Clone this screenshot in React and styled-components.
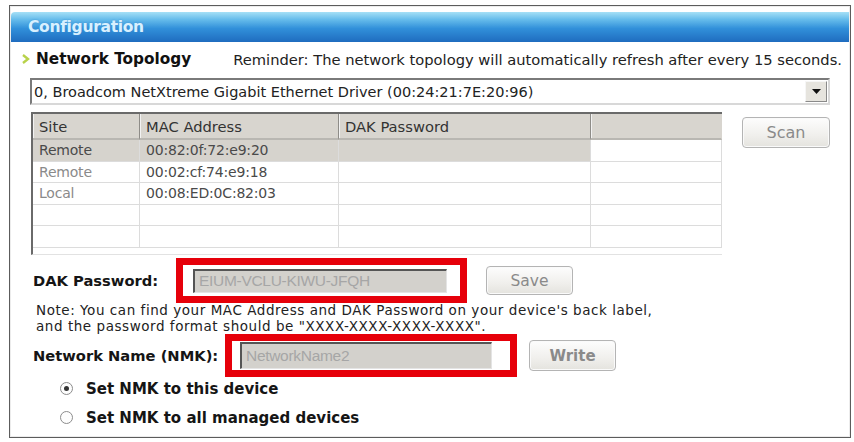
import React, { useState } from "react";
import styled, { createGlobalStyle } from "styled-components";

const GlobalStyle = createGlobalStyle`
  body {
    margin: 0;
    background: #ffffff;
    font-family: "DejaVu Sans", Verdana, sans-serif;
  }
`;

const Frame = styled.div`
  box-sizing: border-box;
  margin: 5px 0 0 9px;
  width: 842px;
  height: 433px;
  border: 1px solid #5c5c5c;
  box-shadow: inset 0 0 0 1px #ececec;
  background: #fff;
`;

const TitleBar = styled.div`
  margin: 6px 1px 0 1px;
  height: 30px;
  padding-left: 17px;
  display: flex;
  align-items: center;
  font-size: 15.5px;
  font-weight: bold;
  color: #d8f0ff;
  letter-spacing: -0.3px;
  text-shadow: 0 0 2px #3f8fd0;
  background: linear-gradient(#a6e0f6 0%, #66bceb 25%, #3190da 55%, #1f6cbf 100%);
  border-top-left-radius: 4px;
`;

const Body = styled.div`
  padding: 0 20px;
`;

const TopicRow = styled.div`
  display: flex;
  align-items: center;
  height: 22px;
  margin: 6px -12px 0 -9px;
  font-size: 14.7px;
  color: #222;
`;

const TopicTitle = styled.span`
  font-weight: bold;
  font-size: 15.3px;
  color: #111;
  margin-left: 1px;
`;

const Reminder = styled.span`
  margin-left: auto;
`;

const Select = styled.div`
  box-sizing: border-box;
  margin-top: 8px;
  height: 27px;
  display: flex;
  align-items: center;
  border: 2px solid #7a7a7a;
  border-right-color: #d8d8d8;
  border-bottom-color: #d8d8d8;
  font-size: 14.5px;
  color: #222;
  padding-left: 2px;
`;

const SelectText = styled.span`
  flex: 1;
`;

const SelectArrow = styled.div`
  width: 22px;
  height: 21px;
  margin-right: 1px;
  display: flex;
  align-items: center;
  justify-content: center;
  background: #e6e4de;
  border: 1px solid #8a8a8a;
  border-top-color: #f6f6f6;
  border-left-color: #f6f6f6;
  box-sizing: border-box;
`;

const TableRow = styled.div`
  display: flex;
  align-items: flex-start;
  margin-top: 7px;
`;

const Table = styled.div`
  box-sizing: border-box;
  margin-left: 1px;
  width: 692px;
  height: 143px;
  border-top: 2px solid #6a6a6a;
  border-left: 2px solid #6a6a6a;
  border-bottom: 1px solid #e2e2e2;
  display: grid;
  grid-template-columns: 107px 199px 252px 1fr;
  grid-template-rows: 26px repeat(5, 21.5px);
  align-content: start;
`;

const HeadCell = styled.div`
  background: #d8d5cf;
  color: #333;
  padding-left: 6px;
  display: flex;
  align-items: center;
  font-size: 14.7px;
  border-right: 1px solid ${(p) => (p.last ? "#d8d5cf" : "#8e8c88")};
  border-bottom: 2px solid #b9b7b2;
  box-shadow: inset 1px 0 0 #f2f2f2;
`;

const Cell = styled.div`
  background: ${(p) => (p.selected ? "#d6d3cd" : "#fff")};
  color: ${(p) => (p.dim ? "#8a8a8a" : "#4a4a4a")};
  padding-left: 6px;
  display: flex;
  align-items: center;
  border-right: 1px solid #dcdcdc;
  border-bottom: 1px solid #dcdcdc;
  font-size: 14px;
  letter-spacing: -0.2px;
  white-space: nowrap;
`;

const Button = styled.button`
  box-sizing: border-box;
  width: ${(p) => p.w || 87}px;
  height: ${(p) => p.h || 29}px;
  margin-left: ${(p) => p.ml || 0}px;
  margin-top: ${(p) => p.mt || 0}px;
  border: 1px solid #b4b4b4;
  border-radius: 4px;
  background: linear-gradient(#fdfdfd, #f0efec 60%, #e4e3de);
  box-shadow: inset 0 0 0 1px #fafafa;
  color: #8a8a8a;
  font-family: "DejaVu Sans", Verdana, sans-serif;
  font-size: ${(p) => p.fs || 15.5}px;
  font-weight: ${(p) => (p.bold ? "bold" : "normal")};
  padding: 0;
`;

const FieldRow = styled.div`
  display: flex;
  align-items: center;
  margin-top: ${(p) => p.mt}px;
  padding-left: 3px;
`;

const Label = styled.div`
  width: ${(p) => p.w}px;
  font-size: 14.7px;
  font-weight: bold;
  color: #151515;
`;

const FieldWrap = styled.div`
  position: relative;
`;

const Input = styled.div`
  box-sizing: border-box;
  width: ${(p) => p.w}px;
  height: ${(p) => p.h}px;
  background: #d3d1cc;
  border-top: 2px solid #555;
  border-left: 2px solid #555;
  border-right: 1px solid #e4e4e4;
  border-bottom: 1px solid #e4e4e4;
  color: #a6a6a6;
  font-family: "Liberation Sans", Arial, sans-serif;
  font-size: 15.5px;
  padding-left: 4px;
  display: flex;
  align-items: center;
  letter-spacing: -0.3px;
`;

const RedMark = styled.div`
  position: absolute;
  top: ${(p) => p.t}px;
  bottom: ${(p) => p.b}px;
  left: ${(p) => p.l}px;
  right: ${(p) => p.r}px;
  border: 7px solid #e6000a;
  pointer-events: none;
`;

const Note = styled.div`
  margin-top: 7px;
  padding-left: 6px;
  font-size: 13.5px;
  letter-spacing: 0.55px;
  line-height: 16px;
  color: #222;
  white-space: nowrap;
`;

const RadioGroup = styled.div`
  margin-top: 3px;
  padding-left: 30px;
`;

const RadioRow = styled.label`
  display: flex;
  align-items: center;
  height: 29px;
  font-size: 15px;
  font-weight: bold;
  color: #151515;
  gap: 13px;
`;

const RadioDot = styled.span`
  box-sizing: border-box;
  width: 13px;
  height: 13px;
  border-radius: 50%;
  border: 1px solid #8c8c8c;
  background: #fdfdfd;
  display: flex;
  align-items: center;
  justify-content: center;
  &::after {
    content: "";
    width: 5px;
    height: 5px;
    border-radius: 50%;
    background: ${(p) => (p.on ? "#333" : "transparent")};
  }
`;

const rows = [
  { site: "Remote", mac: "00:82:0f:72:e9:20", selected: true, dim: false },
  { site: "Remote", mac: "00:02:cf:74:e9:18", selected: false, dim: true },
  { site: "Local", mac: "00:08:ED:0C:82:03", selected: false, dim: true },
  { site: "", mac: "", selected: false, dim: true },
  { site: "", mac: "", selected: false, dim: true },
];

const App = () => {
  const [mode, setMode] = useState("this");

  return (
    <>
      <GlobalStyle />
      <Frame>
        <TitleBar>Configuration</TitleBar>
        <Body>
          <TopicRow>
            <svg width="10" height="10" viewBox="0 0 10 10" style={{ marginRight: 4 }}>
              <path d="M2 1 L7 5 L2 9" fill="none" stroke="#b8d24a" strokeWidth="2.4" />
            </svg>
            <TopicTitle>Network Topology</TopicTitle>
            <Reminder>
              Reminder: The network topology will automatically refresh after every 15 seconds.
            </Reminder>
          </TopicRow>

          <Select>
            <SelectText>0, Broadcom NetXtreme Gigabit Ethernet Driver (00:24:21:7E:20:96)</SelectText>
            <SelectArrow>
              <svg width="9" height="6" viewBox="0 0 9 6">
                <path d="M0 0 H9 L4.5 5 Z" fill="#111" />
              </svg>
            </SelectArrow>
          </Select>

          <TableRow>
            <Table>
              <HeadCell>Site</HeadCell>
              <HeadCell>MAC Address</HeadCell>
              <HeadCell>DAK Password</HeadCell>
              <HeadCell last />
              {rows.map((r, i) => (
                <React.Fragment key={i}>
                  <Cell selected={r.selected} dim={r.dim}>{r.site}</Cell>
                  <Cell selected={r.selected}>{r.mac}</Cell>
                  <Cell selected={r.selected} />
                  <Cell />
                </React.Fragment>
              ))}
            </Table>
            <Button w={88} h={31} ml={20} mt={5} fs={16}>Scan</Button>
          </TableRow>

          <FieldRow mt={11}>
            <Label w={160}>DAK Password:</Label>
            <FieldWrap>
              <Input w={254} h={24}>EIUM-VCLU-KIWU-JFQH</Input>
              <RedMark t={-11} b={-10} l={-17} r={-20} />
            </FieldWrap>
            <Button w={87} h={29} ml={39}>Save</Button>
          </FieldRow>

          <Note>
            Note: You can find your MAC Address and DAK Password on your device's back label,
            <br />
            and the password format should be "XXXX-XXXX-XXXX-XXXX".
          </Note>

          <FieldRow mt={6}>
            <Label w={207}>Network Name (NMK):</Label>
            <FieldWrap>
              <Input w={252} h={27}>NetworkName2</Input>
              <RedMark t={-8} b={-8} l={-15} r={-25} />
            </FieldWrap>
            <Button w={87} h={31} ml={37} fs={15} bold>Write</Button>
          </FieldRow>

          <RadioGroup>
            <RadioRow onClick={() => setMode("this")}>
              <RadioDot on={mode === "this"} />
              Set NMK to this device
            </RadioRow>
            <RadioRow onClick={() => setMode("all")}>
              <RadioDot on={mode === "all"} />
              Set NMK to all managed devices
            </RadioRow>
          </RadioGroup>
        </Body>
      </Frame>
    </>
  );
};

export default App;
